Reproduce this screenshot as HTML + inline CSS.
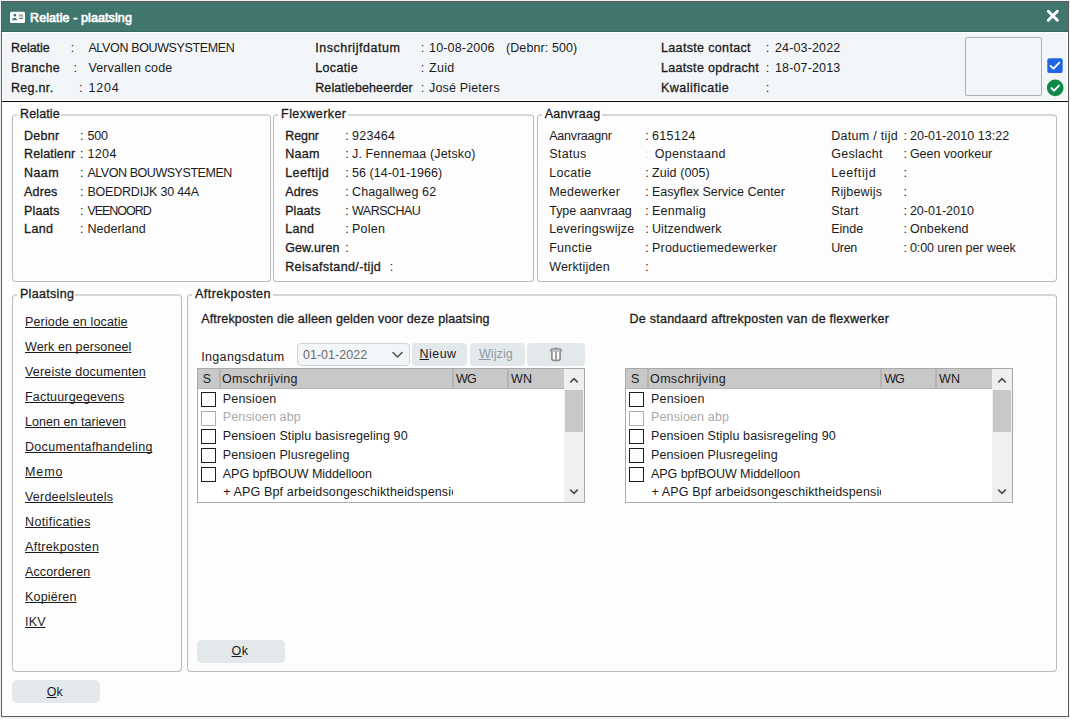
<!DOCTYPE html>
<html><head><meta charset="utf-8">
<style>
html,body{margin:0;padding:0;}
body{width:1070px;height:719px;background:#eef2f5;position:relative;overflow:hidden;font-family:"Liberation Sans",sans-serif;}
.t{position:absolute;white-space:pre;line-height:20px;font-family:"Liberation Sans",sans-serif;}
.win{position:absolute;left:1px;top:1px;width:1066px;height:714px;border:1px solid #5c5c5c;background:#fdfdfd;}
.gb{position:absolute;border:1px solid #bcbcbc;border-top:2px solid #d6d6d6;border-radius:4px;box-sizing:border-box;}
.gm{position:absolute;background:#fdfdfd;height:7px;}
.btn{position:absolute;background:#e3e8eb;border-radius:5px;}
.cb{position:absolute;width:13px;height:13px;border:1px solid #1e1e1e;background:#fff;}
</style></head><body>
<div class="win"></div>
<!-- title bar -->
<div style="position:absolute;left:2px;top:2px;width:1066px;height:30px;background:#40766e;"></div>
<div style="position:absolute;left:2px;top:31px;width:1066px;height:1px;background:#356a62;"></div>
<!-- header -->
<div style="position:absolute;left:2px;top:32px;width:1066px;height:69px;background:#fff;"></div>
<div style="position:absolute;left:3px;top:33px;width:1064px;height:67px;background:#f2f6f9;"></div>
<div style="position:absolute;left:2px;top:101px;width:1066px;height:1px;background:#0c0c0c;"></div>
<!-- title icon -->
<svg style="position:absolute;left:10px;top:11px" width="16" height="13" viewBox="0 0 16 13">
<rect x="0" y="0.7" width="15" height="11.3" rx="1.6" fill="#fff"/>
<circle cx="4.85" cy="4.15" r="1.3" fill="#40766e"/>
<path d="M2 9.3 Q2.2 6.9 4.6 6.8 Q7 6.9 7.2 9.3 Z" fill="#40766e"/>
<rect x="8.9" y="3.2" width="4.2" height="2.5" fill="#9db9b4"/>
<rect x="8.9" y="6.8" width="4.2" height="1.1" fill="#40766e"/>
</svg>
<div class="t" style="left:30px;top:8px;font-size:12.5px;font-weight:400;color:#fff;-webkit-text-stroke:0.65px #fff;letter-spacing:0.1px;">Relatie - plaatsing</div>
<!-- close X -->
<svg style="position:absolute;left:1046px;top:9px" width="14" height="14" viewBox="0 0 14 14">
<path d="M2.3 2.2 L11.4 11.3 M11.4 2.2 L2.3 11.3" stroke="#fff" stroke-width="2.9" stroke-linecap="round"/>
</svg>
<!-- photo box -->
<div style="position:absolute;left:965px;top:37px;width:75px;height:57px;border:1px solid #b0b0b0;border-radius:2px;"></div>
<!-- blue checkbox -->
<svg style="position:absolute;left:1047px;top:58px" width="16" height="16" viewBox="0 0 16 16">
<rect x="0.3" y="0.3" width="15.4" height="14.8" rx="2.2" fill="#1f66e3"/>
<path d="M3.5 7.8 L6.5 10.6 L12.3 4.6" stroke="#fff" stroke-width="1.8" fill="none" stroke-linecap="round" stroke-linejoin="round"/>
</svg>
<!-- green circle -->
<svg style="position:absolute;left:1046px;top:79px" width="18" height="18" viewBox="0 0 18 18">
<circle cx="9.2" cy="8.9" r="8.3" fill="#0d8a47"/>
<path d="M5.4 9.1 L8.1 11.7 L13 6.6" stroke="#fff" stroke-width="1.9" fill="none" stroke-linecap="round" stroke-linejoin="round"/>
</svg>

<!-- group boxes -->
<div class="gb" style="left:12px;top:114px;width:259px;height:168px;"></div>
<div class="gm" style="left:17px;top:111px;width:44px;"></div>
<div class="gb" style="left:273px;top:114px;width:261px;height:168px;"></div>
<div class="gm" style="left:278px;top:111px;width:70px;"></div>
<div class="gb" style="left:537px;top:114px;width:520px;height:168px;"></div>
<div class="gm" style="left:542px;top:111px;width:60px;"></div>
<div class="gb" style="left:12px;top:294px;width:170px;height:378px;"></div>
<div class="gm" style="left:17px;top:291px;width:58px;"></div>
<div class="gb" style="left:187px;top:294px;width:870px;height:378px;"></div>
<div class="gm" style="left:192px;top:291px;width:81px;"></div>

<!-- Aftrekposten contents -->
<!-- date field -->
<div style="position:absolute;left:297px;top:343px;width:111px;height:21px;border:1px solid #cdd5dc;border-radius:4px;background:#f3f6f9;"></div>
<svg style="position:absolute;left:391px;top:350px" width="13" height="10" viewBox="0 0 13 10">
<path d="M2 2.5 L6.5 7 L11 2.5" stroke="#555" stroke-width="1.6" fill="none" stroke-linecap="round" stroke-linejoin="round"/>
</svg>
<div class="btn" style="left:412px;top:343px;width:55px;height:23px;border-radius:4px;"></div>
<div class="btn" style="left:470px;top:343px;width:55px;height:23px;border-radius:4px;"></div>
<div class="btn" style="left:527px;top:343px;width:58px;height:23px;border-radius:4px;"></div>
<svg style="position:absolute;left:548px;top:346px" width="16" height="16" viewBox="0 0 16 16">
<rect x="7.2" y="1.2" width="1.6" height="1.6" fill="#8c8c8c"/>
<rect x="2.9" y="2.9" width="10.2" height="2.4" rx="0.8" fill="#fff" stroke="#8c8c8c" stroke-width="1.5"/>
<path d="M3.9 5.6 V13 Q3.9 14.3 5.2 14.3 H10.8 Q12.1 14.3 12.1 13 V5.6" fill="#fff" stroke="#8c8c8c" stroke-width="1.7"/>
<rect x="7.2" y="5.6" width="1.6" height="8" fill="#8c8c8c"/>
</svg>

<div style="position:absolute;left:197px;top:368px;width:386px;height:133px;border:1px solid #a9a9a9;background:#fff;"></div>
<div style="position:absolute;left:198px;top:369px;width:366px;height:20px;background:#c8c8c8;border-bottom:1px solid #b4b4b4;box-sizing:border-box;"></div>
<div style="position:absolute;left:219px;top:369px;width:2px;height:20px;background:#b4b4b4;"></div>
<div style="position:absolute;left:452px;top:369px;width:2px;height:20px;background:#b4b4b4;"></div>
<div style="position:absolute;left:507px;top:369px;width:2px;height:20px;background:#b4b4b4;"></div>
<div style="position:absolute;left:564px;top:369px;width:20px;height:133px;background:#efefef;"></div>
<div style="position:absolute;left:565px;top:390px;width:18px;height:42px;background:#c8c8c8;"></div>
<svg style="position:absolute;left:569px;top:376px" width="10" height="8" viewBox="0 0 10 8"><path d="M1.8 5.8 L5 2.6 L8.2 5.8" stroke="#4a4a4a" stroke-width="1.6" fill="none" stroke-linecap="square"/></svg>
<svg style="position:absolute;left:569px;top:488px" width="10" height="8" viewBox="0 0 10 8"><path d="M1.8 2.2 L5 5.4 L8.2 2.2" stroke="#4a4a4a" stroke-width="1.6" fill="none" stroke-linecap="square"/></svg>
<div class="cb" style="left:201px;top:392px;border-color:#1e1e1e;"></div>
<div class="cb" style="left:201px;top:411px;border-color:#adadad;"></div>
<div class="cb" style="left:201px;top:429px;border-color:#1e1e1e;"></div>
<div class="cb" style="left:201px;top:448px;border-color:#1e1e1e;"></div>
<div class="cb" style="left:201px;top:467px;border-color:#1e1e1e;"></div>
<div style="position:absolute;left:625px;top:368px;width:386px;height:133px;border:1px solid #a9a9a9;background:#fff;"></div>
<div style="position:absolute;left:626px;top:369px;width:366px;height:20px;background:#c8c8c8;border-bottom:1px solid #b4b4b4;box-sizing:border-box;"></div>
<div style="position:absolute;left:647px;top:369px;width:2px;height:20px;background:#b4b4b4;"></div>
<div style="position:absolute;left:880px;top:369px;width:2px;height:20px;background:#b4b4b4;"></div>
<div style="position:absolute;left:935px;top:369px;width:2px;height:20px;background:#b4b4b4;"></div>
<div style="position:absolute;left:992px;top:369px;width:20px;height:133px;background:#efefef;"></div>
<div style="position:absolute;left:993px;top:390px;width:18px;height:42px;background:#c8c8c8;"></div>
<svg style="position:absolute;left:997px;top:376px" width="10" height="8" viewBox="0 0 10 8"><path d="M1.8 5.8 L5 2.6 L8.2 5.8" stroke="#4a4a4a" stroke-width="1.6" fill="none" stroke-linecap="square"/></svg>
<svg style="position:absolute;left:997px;top:488px" width="10" height="8" viewBox="0 0 10 8"><path d="M1.8 2.2 L5 5.4 L8.2 2.2" stroke="#4a4a4a" stroke-width="1.6" fill="none" stroke-linecap="square"/></svg>
<div class="cb" style="left:629px;top:392px;border-color:#1e1e1e;"></div>
<div class="cb" style="left:629px;top:411px;border-color:#adadad;"></div>
<div class="cb" style="left:629px;top:429px;border-color:#1e1e1e;"></div>
<div class="cb" style="left:629px;top:448px;border-color:#1e1e1e;"></div>
<div class="cb" style="left:629px;top:467px;border-color:#1e1e1e;"></div>

<!-- ok buttons -->
<div class="btn" style="left:197px;top:640px;width:88px;height:23px;"></div>
<div class="btn" style="left:12px;top:680px;width:88px;height:23px;"></div>

<div class="t" style="left:11.00px;top:38px;font-size:12.5px;font-weight:400;color:#1b1b1b;letter-spacing:-0.033px;-webkit-text-stroke:0.3px #1b1b1b;">Relatie</div>
<div class="t" style="left:70.80px;top:38px;font-size:12.5px;font-weight:400;color:#1b1b1b;letter-spacing:0px;">:</div>
<div class="t" style="left:88.40px;top:38px;font-size:12.5px;font-weight:400;color:#1b1b1b;letter-spacing:-0.359px;">ALVON BOUWSYSTEMEN</div>
<div class="t" style="left:11.00px;top:58px;font-size:12.5px;font-weight:400;color:#1b1b1b;letter-spacing:0.35px;-webkit-text-stroke:0.3px #1b1b1b;">Branche</div>
<div class="t" style="left:73.60px;top:58px;font-size:12.5px;font-weight:400;color:#1b1b1b;letter-spacing:0px;">:</div>
<div class="t" style="left:88.40px;top:58px;font-size:12.5px;font-weight:400;color:#1b1b1b;letter-spacing:0.138px;">Vervallen code</div>
<div class="t" style="left:11.00px;top:78px;font-size:12.5px;font-weight:400;color:#1b1b1b;letter-spacing:0.3px;-webkit-text-stroke:0.3px #1b1b1b;">Reg.nr.</div>
<div class="t" style="left:79.10px;top:78px;font-size:12.5px;font-weight:400;color:#1b1b1b;letter-spacing:0px;">:</div>
<div class="t" style="left:88.40px;top:78px;font-size:12.5px;font-weight:400;color:#1b1b1b;letter-spacing:0.833px;">1204</div>
<div class="t" style="left:315.20px;top:38px;font-size:12.5px;font-weight:400;color:#1b1b1b;letter-spacing:0.523px;-webkit-text-stroke:0.3px #1b1b1b;">Inschrijfdatum</div>
<div class="t" style="left:420.80px;top:38px;font-size:12.5px;font-weight:400;color:#1b1b1b;letter-spacing:0px;">:</div>
<div class="t" style="left:429.00px;top:38px;font-size:12.5px;font-weight:400;color:#1b1b1b;letter-spacing:0.178px;">10-08-2006</div>
<div class="t" style="left:315.20px;top:58px;font-size:12.5px;font-weight:400;color:#1b1b1b;letter-spacing:0.367px;-webkit-text-stroke:0.3px #1b1b1b;">Locatie</div>
<div class="t" style="left:420.80px;top:58px;font-size:12.5px;font-weight:400;color:#1b1b1b;letter-spacing:0px;">:</div>
<div class="t" style="left:429.00px;top:58px;font-size:12.5px;font-weight:400;color:#1b1b1b;letter-spacing:0.333px;">Zuid</div>
<div class="t" style="left:315.20px;top:78px;font-size:12.5px;font-weight:400;color:#1b1b1b;letter-spacing:0.113px;-webkit-text-stroke:0.3px #1b1b1b;">Relatiebeheerder</div>
<div class="t" style="left:420.80px;top:78px;font-size:12.5px;font-weight:400;color:#1b1b1b;letter-spacing:0px;">:</div>
<div class="t" style="left:429.00px;top:78px;font-size:12.5px;font-weight:400;color:#1b1b1b;letter-spacing:0.173px;">José Pieters</div>
<div class="t" style="left:506.00px;top:38px;font-size:12.5px;font-weight:400;color:#1b1b1b;letter-spacing:0.091px;">(Debnr: 500)</div>
<div class="t" style="left:661.00px;top:38px;font-size:12.5px;font-weight:400;color:#1b1b1b;letter-spacing:0.343px;-webkit-text-stroke:0.3px #1b1b1b;">Laatste contact</div>
<div class="t" style="left:765.70px;top:38px;font-size:12.5px;font-weight:400;color:#1b1b1b;letter-spacing:0px;">:</div>
<div class="t" style="left:775.00px;top:38px;font-size:12.5px;font-weight:400;color:#1b1b1b;letter-spacing:0.144px;">24-03-2022</div>
<div class="t" style="left:661.00px;top:58px;font-size:12.5px;font-weight:400;color:#1b1b1b;letter-spacing:0.307px;-webkit-text-stroke:0.3px #1b1b1b;">Laatste opdracht</div>
<div class="t" style="left:765.70px;top:58px;font-size:12.5px;font-weight:400;color:#1b1b1b;letter-spacing:0px;">:</div>
<div class="t" style="left:775.00px;top:58px;font-size:12.5px;font-weight:400;color:#1b1b1b;letter-spacing:0.144px;">18-07-2013</div>
<div class="t" style="left:661.00px;top:78px;font-size:12.5px;font-weight:400;color:#1b1b1b;letter-spacing:0.482px;-webkit-text-stroke:0.3px #1b1b1b;">Kwalificatie</div>
<div class="t" style="left:765.70px;top:78px;font-size:12.5px;font-weight:400;color:#1b1b1b;letter-spacing:0px;">:</div>
<div class="t" style="left:24.10px;top:126px;font-size:12.5px;font-weight:400;color:#1b1b1b;letter-spacing:0.225px;-webkit-text-stroke:0.3px #1b1b1b;">Debnr</div>
<div class="t" style="left:80.10px;top:126px;font-size:12.5px;font-weight:400;color:#1b1b1b;letter-spacing:0px;">:</div>
<div class="t" style="left:87.40px;top:126px;font-size:12.5px;font-weight:400;color:#1b1b1b;letter-spacing:-0.2px;">500</div>
<div class="t" style="left:24.10px;top:144px;font-size:12.5px;font-weight:400;color:#1b1b1b;letter-spacing:0.125px;-webkit-text-stroke:0.3px #1b1b1b;">Relatienr</div>
<div class="t" style="left:80.10px;top:144px;font-size:12.5px;font-weight:400;color:#1b1b1b;letter-spacing:0px;">:</div>
<div class="t" style="left:87.40px;top:144px;font-size:12.5px;font-weight:400;color:#1b1b1b;letter-spacing:0.4px;">1204</div>
<div class="t" style="left:24.10px;top:163px;font-size:12.5px;font-weight:400;color:#1b1b1b;letter-spacing:0.367px;-webkit-text-stroke:0.3px #1b1b1b;">Naam</div>
<div class="t" style="left:80.10px;top:163px;font-size:12.5px;font-weight:400;color:#1b1b1b;letter-spacing:0px;">:</div>
<div class="t" style="left:87.40px;top:163px;font-size:12.5px;font-weight:400;color:#1b1b1b;letter-spacing:-0.447px;">ALVON BOUWSYSTEMEN</div>
<div class="t" style="left:24.10px;top:182px;font-size:12.5px;font-weight:400;color:#1b1b1b;letter-spacing:0.125px;-webkit-text-stroke:0.3px #1b1b1b;">Adres</div>
<div class="t" style="left:80.10px;top:182px;font-size:12.5px;font-weight:400;color:#1b1b1b;letter-spacing:0px;">:</div>
<div class="t" style="left:87.40px;top:182px;font-size:12.5px;font-weight:400;color:#1b1b1b;letter-spacing:-0.2px;">BOEDRDIJK 30 44A</div>
<div class="t" style="left:24.10px;top:201px;font-size:12.5px;font-weight:400;color:#1b1b1b;letter-spacing:0.12px;-webkit-text-stroke:0.3px #1b1b1b;">Plaats</div>
<div class="t" style="left:80.10px;top:201px;font-size:12.5px;font-weight:400;color:#1b1b1b;letter-spacing:0px;">:</div>
<div class="t" style="left:87.40px;top:201px;font-size:12.5px;font-weight:400;color:#1b1b1b;letter-spacing:-1.029px;">VEENOORD</div>
<div class="t" style="left:24.10px;top:219px;font-size:12.5px;font-weight:400;color:#1b1b1b;letter-spacing:0.333px;-webkit-text-stroke:0.3px #1b1b1b;">Land</div>
<div class="t" style="left:80.10px;top:219px;font-size:12.5px;font-weight:400;color:#1b1b1b;letter-spacing:0px;">:</div>
<div class="t" style="left:87.40px;top:219px;font-size:12.5px;font-weight:400;color:#1b1b1b;letter-spacing:0.075px;">Nederland</div>
<div class="t" style="left:285.20px;top:126px;font-size:12.5px;font-weight:400;color:#1b1b1b;letter-spacing:-0.05px;-webkit-text-stroke:0.3px #1b1b1b;">Regnr</div>
<div class="t" style="left:345.30px;top:126px;font-size:12.5px;font-weight:400;color:#1b1b1b;letter-spacing:0px;">:</div>
<div class="t" style="left:352.00px;top:126px;font-size:12.5px;font-weight:400;color:#1b1b1b;letter-spacing:0.26px;">923464</div>
<div class="t" style="left:285.20px;top:144px;font-size:12.5px;font-weight:400;color:#1b1b1b;letter-spacing:0.267px;-webkit-text-stroke:0.3px #1b1b1b;">Naam</div>
<div class="t" style="left:345.30px;top:144px;font-size:12.5px;font-weight:400;color:#1b1b1b;letter-spacing:0px;">:</div>
<div class="t" style="left:352.00px;top:144px;font-size:12.5px;font-weight:400;color:#1b1b1b;letter-spacing:0.132px;">J. Fennemaa (Jetsko)</div>
<div class="t" style="left:285.20px;top:163px;font-size:12.5px;font-weight:400;color:#1b1b1b;letter-spacing:0.443px;-webkit-text-stroke:0.3px #1b1b1b;">Leeftijd</div>
<div class="t" style="left:345.30px;top:163px;font-size:12.5px;font-weight:400;color:#1b1b1b;letter-spacing:0px;">:</div>
<div class="t" style="left:352.00px;top:163px;font-size:12.5px;font-weight:400;color:#1b1b1b;letter-spacing:0.043px;">56 (14-01-1966)</div>
<div class="t" style="left:285.20px;top:182px;font-size:12.5px;font-weight:400;color:#1b1b1b;letter-spacing:0.125px;-webkit-text-stroke:0.3px #1b1b1b;">Adres</div>
<div class="t" style="left:345.30px;top:182px;font-size:12.5px;font-weight:400;color:#1b1b1b;letter-spacing:0px;">:</div>
<div class="t" style="left:352.00px;top:182px;font-size:12.5px;font-weight:400;color:#1b1b1b;letter-spacing:0.117px;">Chagallweg 62</div>
<div class="t" style="left:285.20px;top:201px;font-size:12.5px;font-weight:400;color:#1b1b1b;letter-spacing:0.1px;-webkit-text-stroke:0.3px #1b1b1b;">Plaats</div>
<div class="t" style="left:345.30px;top:201px;font-size:12.5px;font-weight:400;color:#1b1b1b;letter-spacing:0px;">:</div>
<div class="t" style="left:352.00px;top:201px;font-size:12.5px;font-weight:400;color:#1b1b1b;letter-spacing:-0.514px;">WARSCHAU</div>
<div class="t" style="left:285.20px;top:219px;font-size:12.5px;font-weight:400;color:#1b1b1b;letter-spacing:0.3px;-webkit-text-stroke:0.3px #1b1b1b;">Land</div>
<div class="t" style="left:345.30px;top:219px;font-size:12.5px;font-weight:400;color:#1b1b1b;letter-spacing:0px;">:</div>
<div class="t" style="left:352.00px;top:219px;font-size:12.5px;font-weight:400;color:#1b1b1b;letter-spacing:0.25px;">Polen</div>
<div class="t" style="left:285.20px;top:238px;font-size:12.5px;font-weight:400;color:#1b1b1b;letter-spacing:0.1px;-webkit-text-stroke:0.3px #1b1b1b;">Gew.uren</div>
<div class="t" style="left:345.30px;top:238px;font-size:12.5px;font-weight:400;color:#1b1b1b;letter-spacing:0px;">:</div>
<div class="t" style="left:285.20px;top:257px;font-size:12.5px;font-weight:400;color:#1b1b1b;letter-spacing:0.375px;-webkit-text-stroke:0.3px #1b1b1b;">Reisafstand/-tijd</div>
<div class="t" style="left:389.80px;top:257px;font-size:12.5px;font-weight:400;color:#1b1b1b;letter-spacing:0px;">:</div>
<div class="t" style="left:549.20px;top:126px;font-size:12.5px;font-weight:400;color:#1b1b1b;letter-spacing:-0.2px;">Aanvraagnr</div>
<div class="t" style="left:645.20px;top:126px;font-size:12.5px;font-weight:400;color:#1b1b1b;letter-spacing:0px;">:</div>
<div class="t" style="left:652.00px;top:126px;font-size:12.5px;font-weight:400;color:#1b1b1b;letter-spacing:0.34px;">615124</div>
<div class="t" style="left:549.20px;top:144px;font-size:12.5px;font-weight:400;color:#1b1b1b;letter-spacing:0.34px;">Status</div>
<div class="t" style="left:645.20px;top:144px;font-size:12.5px;font-weight:400;color:#f6e2bd;letter-spacing:0px;">:</div>
<div class="t" style="left:654.70px;top:144px;font-size:12.5px;font-weight:400;color:#1b1b1b;letter-spacing:0.289px;">Openstaand</div>
<div class="t" style="left:549.20px;top:163px;font-size:12.5px;font-weight:400;color:#1b1b1b;letter-spacing:0.283px;">Locatie</div>
<div class="t" style="left:645.20px;top:163px;font-size:12.5px;font-weight:400;color:#1b1b1b;letter-spacing:0px;">:</div>
<div class="t" style="left:652.00px;top:163px;font-size:12.5px;font-weight:400;color:#1b1b1b;letter-spacing:0.078px;">Zuid (005)</div>
<div class="t" style="left:549.20px;top:182px;font-size:12.5px;font-weight:400;color:#1b1b1b;letter-spacing:0.211px;">Medewerker</div>
<div class="t" style="left:645.20px;top:182px;font-size:12.5px;font-weight:400;color:#1b1b1b;letter-spacing:0px;">:</div>
<div class="t" style="left:652.00px;top:182px;font-size:12.5px;font-weight:400;color:#1b1b1b;letter-spacing:-0.027px;">Easyflex Service Center</div>
<div class="t" style="left:549.20px;top:201px;font-size:12.5px;font-weight:400;color:#1b1b1b;letter-spacing:-0.008px;">Type aanvraag</div>
<div class="t" style="left:645.20px;top:201px;font-size:12.5px;font-weight:400;color:#1b1b1b;letter-spacing:0px;">:</div>
<div class="t" style="left:652.00px;top:201px;font-size:12.5px;font-weight:400;color:#1b1b1b;letter-spacing:0.214px;">Eenmalig</div>
<div class="t" style="left:549.20px;top:219px;font-size:12.5px;font-weight:400;color:#1b1b1b;letter-spacing:0.231px;">Leveringswijze</div>
<div class="t" style="left:645.20px;top:219px;font-size:12.5px;font-weight:400;color:#1b1b1b;letter-spacing:0px;">:</div>
<div class="t" style="left:652.00px;top:219px;font-size:12.5px;font-weight:400;color:#1b1b1b;letter-spacing:0.08px;">Uitzendwerk</div>
<div class="t" style="left:549.20px;top:238px;font-size:12.5px;font-weight:400;color:#1b1b1b;letter-spacing:0.283px;">Functie</div>
<div class="t" style="left:645.20px;top:238px;font-size:12.5px;font-weight:400;color:#1b1b1b;letter-spacing:0px;">:</div>
<div class="t" style="left:652.00px;top:238px;font-size:12.5px;font-weight:400;color:#1b1b1b;letter-spacing:0.189px;">Productiemedewerker</div>
<div class="t" style="left:549.20px;top:257px;font-size:12.5px;font-weight:400;color:#1b1b1b;letter-spacing:0.178px;">Werktijden</div>
<div class="t" style="left:645.20px;top:257px;font-size:12.5px;font-weight:400;color:#1b1b1b;letter-spacing:0px;">:</div>
<div class="t" style="left:831.20px;top:126px;font-size:12.5px;font-weight:400;color:#1b1b1b;letter-spacing:0.3px;">Datum / tijd</div>
<div class="t" style="left:903.60px;top:126px;font-size:12.5px;font-weight:400;color:#1b1b1b;letter-spacing:0px;">:</div>
<div class="t" style="left:909.90px;top:126px;font-size:12.5px;font-weight:400;color:#1b1b1b;letter-spacing:0.047px;">20-01-2010 13:22</div>
<div class="t" style="left:831.20px;top:144px;font-size:12.5px;font-weight:400;color:#1b1b1b;letter-spacing:0.271px;">Geslacht</div>
<div class="t" style="left:903.60px;top:144px;font-size:12.5px;font-weight:400;color:#1b1b1b;letter-spacing:0px;">:</div>
<div class="t" style="left:909.90px;top:144px;font-size:12.5px;font-weight:400;color:#1b1b1b;letter-spacing:-0.025px;">Geen voorkeur</div>
<div class="t" style="left:831.20px;top:163px;font-size:12.5px;font-weight:400;color:#1b1b1b;letter-spacing:0.586px;">Leeftijd</div>
<div class="t" style="left:903.60px;top:163px;font-size:12.5px;font-weight:400;color:#1b1b1b;letter-spacing:0px;">:</div>
<div class="t" style="left:831.20px;top:182px;font-size:12.5px;font-weight:400;color:#1b1b1b;letter-spacing:0.188px;">Rijbewijs</div>
<div class="t" style="left:903.60px;top:182px;font-size:12.5px;font-weight:400;color:#1b1b1b;letter-spacing:0px;">:</div>
<div class="t" style="left:831.20px;top:201px;font-size:12.5px;font-weight:400;color:#1b1b1b;letter-spacing:0.225px;">Start</div>
<div class="t" style="left:903.60px;top:201px;font-size:12.5px;font-weight:400;color:#1b1b1b;letter-spacing:0px;">:</div>
<div class="t" style="left:909.90px;top:201px;font-size:12.5px;font-weight:400;color:#1b1b1b;letter-spacing:0.011px;">20-01-2010</div>
<div class="t" style="left:831.20px;top:219px;font-size:12.5px;font-weight:400;color:#1b1b1b;letter-spacing:0.0px;">Einde</div>
<div class="t" style="left:903.60px;top:219px;font-size:12.5px;font-weight:400;color:#1b1b1b;letter-spacing:0px;">:</div>
<div class="t" style="left:909.90px;top:219px;font-size:12.5px;font-weight:400;color:#1b1b1b;letter-spacing:0.143px;">Onbekend</div>
<div class="t" style="left:831.20px;top:238px;font-size:12.5px;font-weight:400;color:#1b1b1b;letter-spacing:-0.367px;">Uren</div>
<div class="t" style="left:903.60px;top:238px;font-size:12.5px;font-weight:400;color:#1b1b1b;letter-spacing:0px;">:</div>
<div class="t" style="left:909.90px;top:238px;font-size:12.5px;font-weight:400;color:#1b1b1b;letter-spacing:-0.065px;">0:00 uren per week</div>
<div class="t" style="left:25px;top:312px;font-size:12.5px;font-weight:400;color:#1b1b1b;text-decoration:underline;text-decoration-skip-ink:none;"><span style="letter-spacing:0.144px">Periode en locati</span>e</div>
<div class="t" style="left:25px;top:337px;font-size:12.5px;font-weight:400;color:#1b1b1b;text-decoration:underline;text-decoration-skip-ink:none;"><span style="letter-spacing:0.103px">Werk en personee</span>l</div>
<div class="t" style="left:25px;top:362px;font-size:12.5px;font-weight:400;color:#1b1b1b;text-decoration:underline;text-decoration-skip-ink:none;"><span style="letter-spacing:0.186px">Vereiste documente</span>n</div>
<div class="t" style="left:25px;top:387px;font-size:12.5px;font-weight:400;color:#1b1b1b;text-decoration:underline;text-decoration-skip-ink:none;"><span style="letter-spacing:0.182px">Factuurgegeven</span>s</div>
<div class="t" style="left:25px;top:412px;font-size:12.5px;font-weight:400;color:#1b1b1b;text-decoration:underline;text-decoration-skip-ink:none;"><span style="letter-spacing:0.047px">Lonen en tarieve</span>n</div>
<div class="t" style="left:25px;top:437px;font-size:12.5px;font-weight:400;color:#1b1b1b;text-decoration:underline;text-decoration-skip-ink:none;"><span style="letter-spacing:0.319px">Documentafhandelin</span>g</div>
<div class="t" style="left:25px;top:462px;font-size:12.5px;font-weight:400;color:#1b1b1b;text-decoration:underline;text-decoration-skip-ink:none;"><span style="letter-spacing:0.917px">Mem</span>o</div>
<div class="t" style="left:25px;top:487px;font-size:12.5px;font-weight:400;color:#1b1b1b;text-decoration:underline;text-decoration-skip-ink:none;"><span style="letter-spacing:0.225px">Verdeelsleutel</span>s</div>
<div class="t" style="left:25px;top:512px;font-size:12.5px;font-weight:400;color:#1b1b1b;text-decoration:underline;text-decoration-skip-ink:none;"><span style="letter-spacing:0.386px">Notificatie</span>s</div>
<div class="t" style="left:25px;top:537px;font-size:12.5px;font-weight:400;color:#1b1b1b;text-decoration:underline;text-decoration-skip-ink:none;"><span style="letter-spacing:0.332px">Aftrekposte</span>n</div>
<div class="t" style="left:25px;top:562px;font-size:12.5px;font-weight:400;color:#1b1b1b;text-decoration:underline;text-decoration-skip-ink:none;"><span style="letter-spacing:0.139px">Accordere</span>n</div>
<div class="t" style="left:25px;top:587px;font-size:12.5px;font-weight:400;color:#1b1b1b;text-decoration:underline;text-decoration-skip-ink:none;"><span style="letter-spacing:0.207px">Kopiëre</span>n</div>
<div class="t" style="left:25px;top:612px;font-size:12.5px;font-weight:400;color:#1b1b1b;text-decoration:underline;text-decoration-skip-ink:none;"><span style="letter-spacing:0.175px">IK</span>V</div>
<div class="t" style="left:201.20px;top:309px;font-size:12.5px;font-weight:400;color:#1b1b1b;letter-spacing:0.169px;-webkit-text-stroke:0.3px #1b1b1b;">Aftrekposten die alleen gelden voor deze plaatsing</div>
<div class="t" style="left:629.50px;top:309px;font-size:12.5px;font-weight:400;color:#1b1b1b;letter-spacing:0.252px;-webkit-text-stroke:0.3px #1b1b1b;">De standaard aftrekposten van de flexwerker</div>
<div class="t" style="left:201.20px;top:347px;font-size:12.5px;font-weight:400;color:#1b1b1b;letter-spacing:0.345px;">Ingangsdatum</div>
<div class="t" style="left:302.90px;top:345px;font-size:12.5px;font-weight:400;color:#6b6b6b;letter-spacing:0.044px;">01-01-2022</div>
<div class="t" style="left:419.50px;top:344px;font-size:12.5px;font-weight:400;color:#1b1b1b;letter-spacing:0.475px;"><span style="text-decoration:underline;text-decoration-skip-ink:none">N</span>ieuw</div>
<div class="t" style="left:478.90px;top:344px;font-size:12.5px;font-weight:400;color:#8d99a6;letter-spacing:0.1px;"><span style="text-decoration:underline;text-decoration-skip-ink:none">W</span>ijzig</div>
<div class="t" style="left:231.60px;top:641px;font-size:12.5px;font-weight:400;color:#1b1b1b;letter-spacing:0.3px;"><span style="text-decoration:underline;text-decoration-skip-ink:none">O</span>k</div>
<div class="t" style="left:46.70px;top:682px;font-size:12.5px;font-weight:400;color:#1b1b1b;letter-spacing:0.1px;"><span style="text-decoration:underline;text-decoration-skip-ink:none">O</span>k</div>
<div class="t" style="left:202.80px;top:369px;font-size:12.5px;font-weight:400;color:#1b1b1b;letter-spacing:0px;">S</div>
<div class="t" style="left:221.90px;top:369px;font-size:12.5px;font-weight:400;color:#1b1b1b;letter-spacing:0.309px;">Omschrijving</div>
<div class="t" style="left:456.00px;top:369px;font-size:12.5px;font-weight:400;color:#1b1b1b;letter-spacing:-0.9px;">WG</div>
<div class="t" style="left:511.10px;top:369px;font-size:12.5px;font-weight:400;color:#1b1b1b;letter-spacing:0.2px;">WN</div>
<div class="t" style="left:222.80px;top:389px;font-size:12.5px;font-weight:400;color:#1b1b1b;letter-spacing:0.186px;">Pensioen</div>
<div class="t" style="left:222.80px;top:407px;font-size:12.5px;font-weight:400;color:#a9a9a9;letter-spacing:0.136px;">Pensioen abp</div>
<div class="t" style="left:222.80px;top:426px;font-size:12.5px;font-weight:400;color:#1b1b1b;letter-spacing:0.11px;">Pensioen Stiplu basisregeling 90</div>
<div class="t" style="left:222.80px;top:445px;font-size:12.5px;font-weight:400;color:#1b1b1b;letter-spacing:0.11px;">Pensioen Plusregeling</div>
<div class="t" style="left:222.80px;top:464px;font-size:12.5px;font-weight:400;color:#1b1b1b;letter-spacing:-0.043px;">APG bpfBOUW Middelloon</div>
<div style="position:absolute;left:223px;top:482px;width:230px;height:20px;overflow:hidden;"><div class="t" style="left:0.20px;top:0;font-size:12.5px;color:#1b1b1b;letter-spacing:0.142px;">+ APG Bpf arbeidsongeschiktheidspensioen</div></div>
<div class="t" style="left:631.00px;top:369px;font-size:12.5px;font-weight:400;color:#1b1b1b;letter-spacing:0px;">S</div>
<div class="t" style="left:650.10px;top:369px;font-size:12.5px;font-weight:400;color:#1b1b1b;letter-spacing:0.309px;">Omschrijving</div>
<div class="t" style="left:884.20px;top:369px;font-size:12.5px;font-weight:400;color:#1b1b1b;letter-spacing:-0.9px;">WG</div>
<div class="t" style="left:938.90px;top:369px;font-size:12.5px;font-weight:400;color:#1b1b1b;letter-spacing:0.2px;">WN</div>
<div class="t" style="left:651.00px;top:389px;font-size:12.5px;font-weight:400;color:#1b1b1b;letter-spacing:0.186px;">Pensioen</div>
<div class="t" style="left:651.00px;top:407px;font-size:12.5px;font-weight:400;color:#a9a9a9;letter-spacing:0.136px;">Pensioen abp</div>
<div class="t" style="left:651.00px;top:426px;font-size:12.5px;font-weight:400;color:#1b1b1b;letter-spacing:0.11px;">Pensioen Stiplu basisregeling 90</div>
<div class="t" style="left:651.00px;top:445px;font-size:12.5px;font-weight:400;color:#1b1b1b;letter-spacing:0.11px;">Pensioen Plusregeling</div>
<div class="t" style="left:651.00px;top:464px;font-size:12.5px;font-weight:400;color:#1b1b1b;letter-spacing:-0.043px;">APG bpfBOUW Middelloon</div>
<div style="position:absolute;left:651px;top:482px;width:230px;height:20px;overflow:hidden;"><div class="t" style="left:0.40px;top:0;font-size:12.5px;color:#1b1b1b;letter-spacing:0.142px;">+ APG Bpf arbeidsongeschiktheidspensioen</div></div>
<div class="t" style="left:20.10px;top:104px;font-size:12.5px;font-weight:400;color:#1b1b1b;letter-spacing:0.1px;-webkit-text-stroke:0.3px #1b1b1b;">Relatie</div>
<div class="t" style="left:281.10px;top:104px;font-size:12.5px;font-weight:400;color:#1b1b1b;letter-spacing:0.422px;-webkit-text-stroke:0.3px #1b1b1b;">Flexwerker</div>
<div class="t" style="left:544.70px;top:104px;font-size:12.5px;font-weight:400;color:#1b1b1b;letter-spacing:0.271px;-webkit-text-stroke:0.3px #1b1b1b;">Aanvraag</div>
<div class="t" style="left:19.90px;top:284px;font-size:12.5px;font-weight:400;color:#1b1b1b;letter-spacing:0.325px;-webkit-text-stroke:0.3px #1b1b1b;">Plaatsing</div>
<div class="t" style="left:195.00px;top:284px;font-size:12.5px;font-weight:400;color:#1b1b1b;letter-spacing:0.482px;-webkit-text-stroke:0.3px #1b1b1b;">Aftrekposten</div>
</body></html>
